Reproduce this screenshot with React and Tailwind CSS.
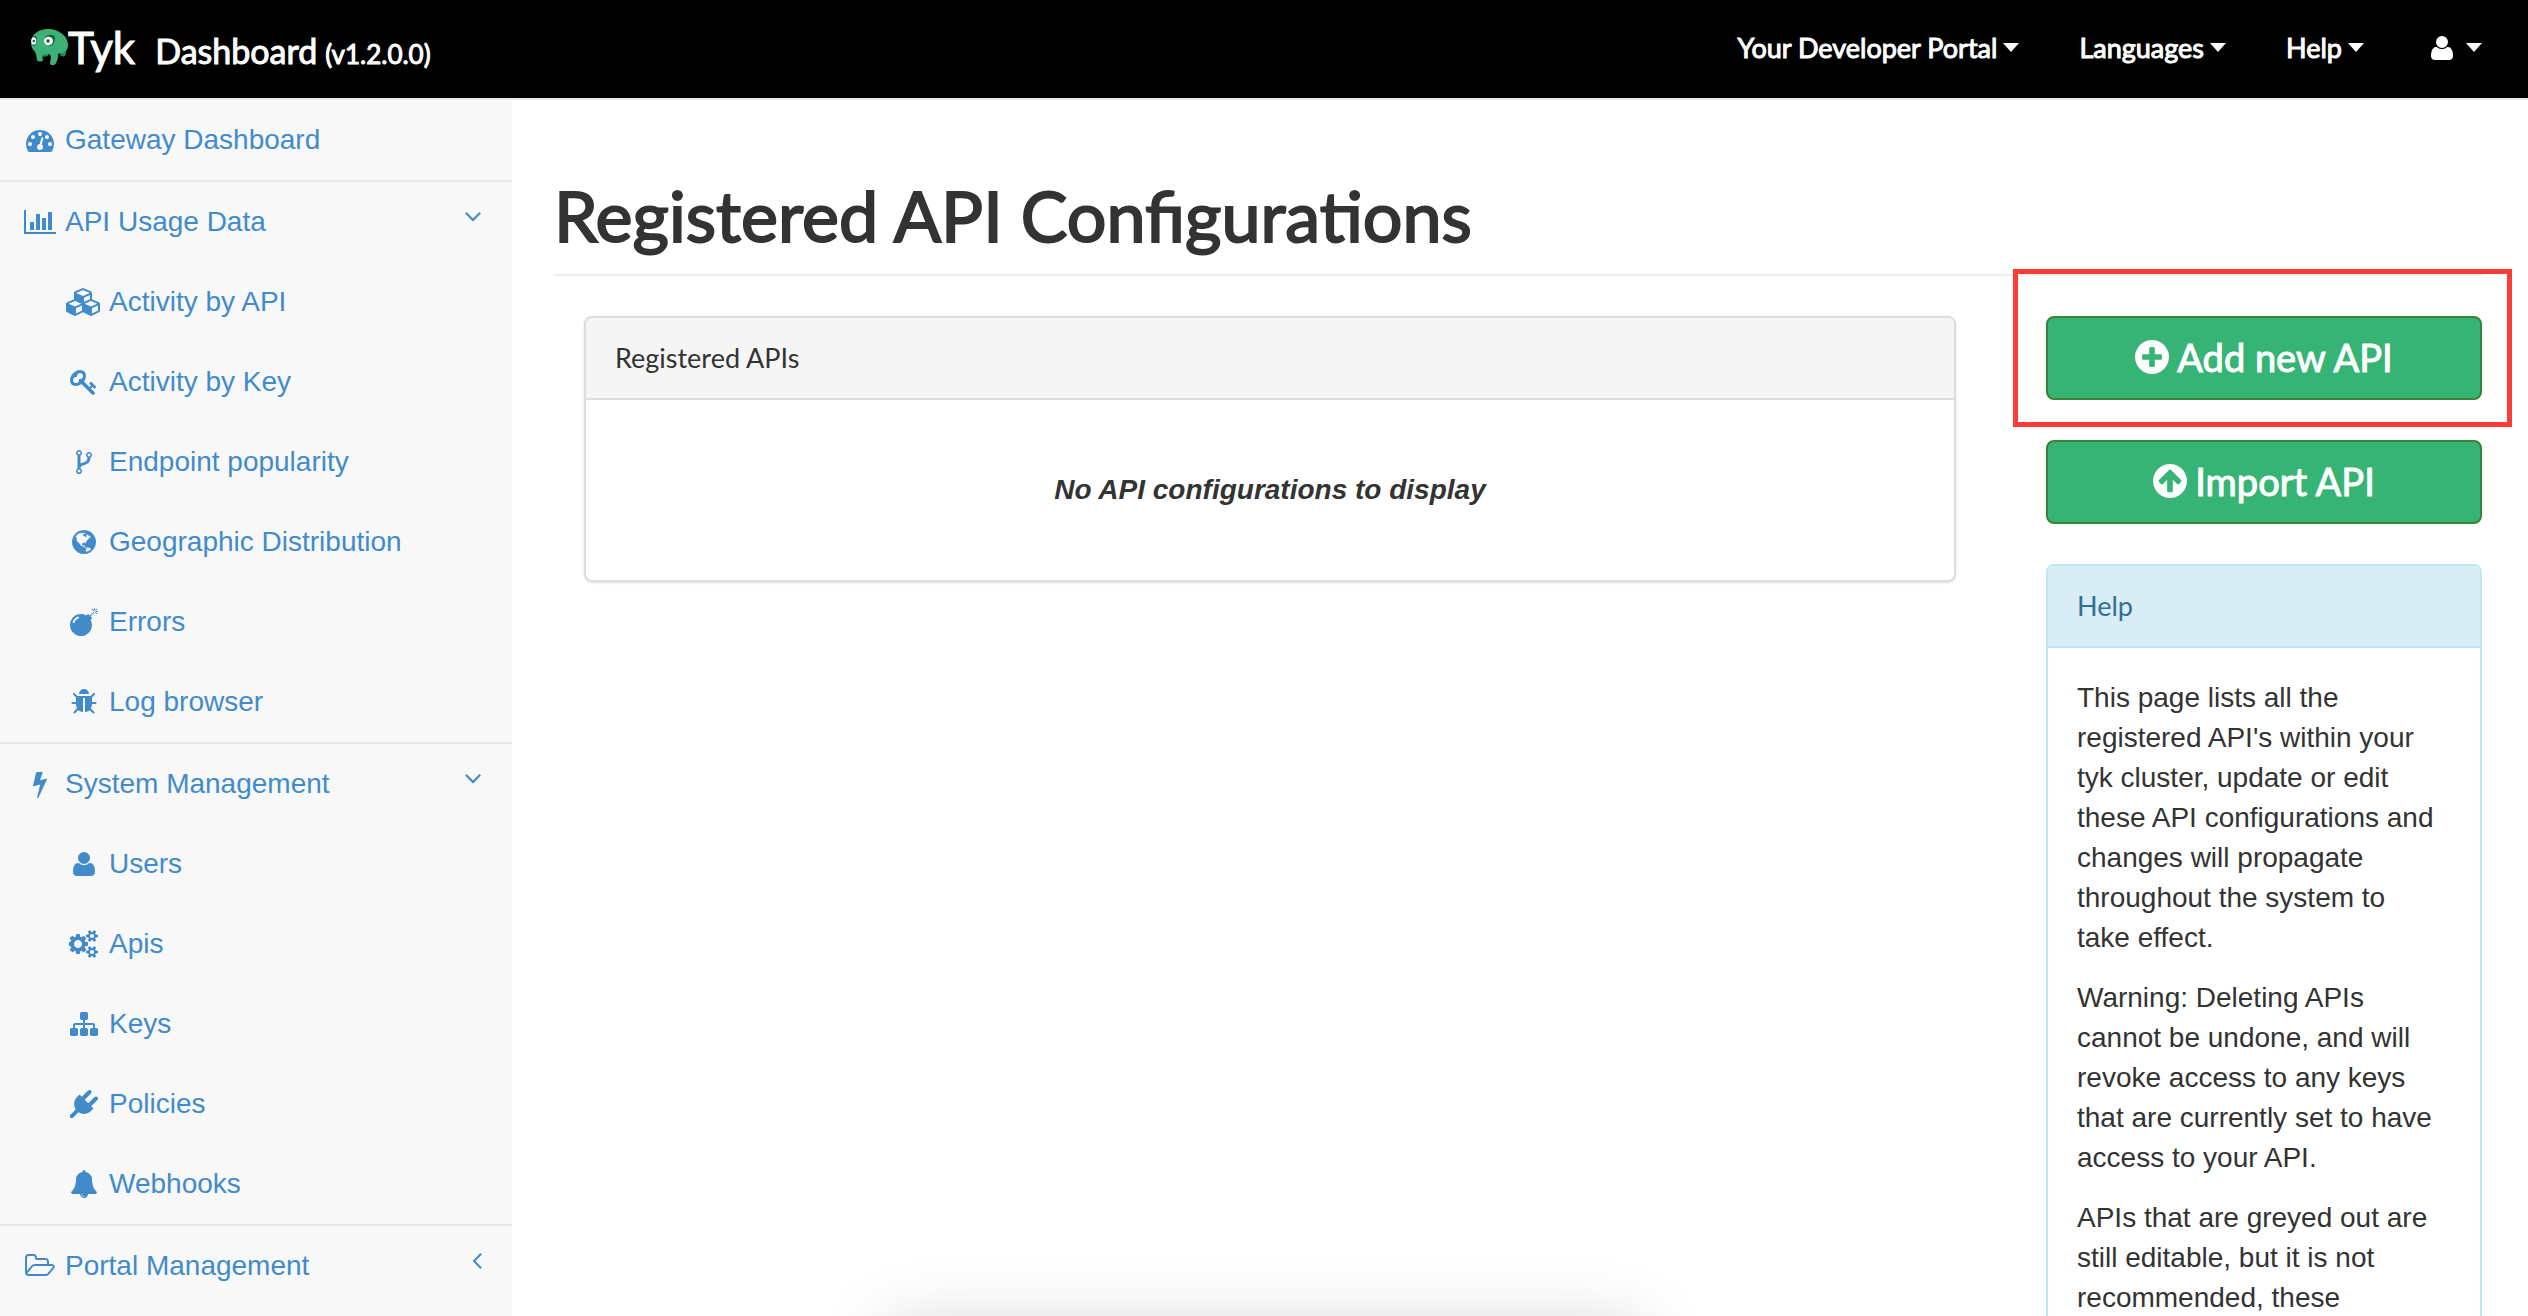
const ICONS = {
  dashboard: [
    1792,
    "M384 1152q0-53-37.5-90.5t-90.5-37.5-90.5 37.5-37.5 90.5 37.5 90.5 90.5 37.5 90.5-37.5 37.5-90.5zm192-448q0-53-37.5-90.5t-90.5-37.5-90.5 37.5-37.5 90.5 37.5 90.5 90.5 37.5 90.5-37.5 37.5-90.5zm428 481l101-382q6-26-7.5-48.5t-38.5-29.5-48 6.5-30 39.5l-101 382q-60 5-107 43.5t-63 98.5q-20 77 20 146t117 89 146-20 89-117q16-60-6-117t-72-91zm660-33q0-53-37.5-90.5t-90.5-37.5-90.5 37.5-37.5 90.5 37.5 90.5 90.5 37.5 90.5-37.5 37.5-90.5zm-640-640q0-53-37.5-90.5t-90.5-37.5-90.5 37.5-37.5 90.5 37.5 90.5 90.5 37.5 90.5-37.5 37.5-90.5zm448 192q0-53-37.5-90.5t-90.5-37.5-90.5 37.5-37.5 90.5 37.5 90.5 90.5 37.5 90.5-37.5 37.5-90.5zm320 448q0 261-141 483-19 29-54 29h-1402q-35 0-54-29-141-221-141-483 0-182 71-348t191-286 286-191 348-71 348 71 286 191 191 286 71 348z",
  ],
  chart: [
    2048,
    "M640 896v512h-256v-512h256zm384-512v1024h-256v-1024h256zm1024 1152v128h-2048v-1536h128v1408h1920zm-640-896v768h-256v-768h256zm384-384v1152h-256v-1152h256z",
  ],
  cubes: [
    2304,
    "M640 1632l384-192v-314l-384 164v342zm-64-454l404-173-404-173-404 173zm1088 454l384-192v-314l-384 164v342zm-64-454l404-173-404-173-404 173zm-448-293l384-165v-266l-384 164v267zm-64-379l441-189-441-189-441 189zm1088 518v416q0 36-19 67t-52 47l-448 224q-25 14-57 14t-57-14l-448-224q-4-2-7-4-2 2-7 4l-448 224q-25 14-57 14t-57-14l-448-224q-33-16-52-47t-19-67v-416q0-38 21.5-70t56.5-48l434-186v-400q0-38 21.5-70t56.5-48l448-192q23-10 50-10t50 10l448 192q35 16 56.5 48t21.5 70v400l434 186q36 16 57 48t21 70z",
  ],
  key: [
    1792,
    "M832 512q0-80-56-136t-136-56-136 56-56 136q0 42 19 83-41-19-83-19-80 0-136 56t-56 136 56 136 136 56 136-56 56-136q0-42-19-83 41 19 83 19 80 0 136-56t56-136zm851 704q0 17-49 66t-66 49q-9 0-28.5-16t-36.5-33-38.5-40-24.5-26l-96 96 220 220q28 28 28 68 0 42-39 81t-81 39q-40 0-68-28l-671-671q-176 131-365 131-163 0-265.5-102.5t-102.5-265.5q0-160 95-313t248-248 313-95q163 0 265.5 102.5t102.5 265.5q0 189-131 365l355 355 96-96q-3-3-26-24.5t-40-38.5-33-36.5-16-28.5q0-17 49-66t66-49q13 0 23 10 6 6 46 44.5t82 79.5 86.5 86 73 78 28.5 41z",
  ],
  fork: [
    1792,
    "M672 1472q0-40-28-68t-68-28-68 28-28 68 28 68 68 28 68-28 28-68zm0-1152q0-40-28-68t-68-28-68 28-28 68 28 68 68 28 68-28 28-68zm640 128q0-40-28-68t-68-28-68 28-28 68 28 68 68 28 68-28 28-68zm96 0q0 52-26 96.5t-70 69.5q-2 287-226 414-67 38-203 81-128 40-169.5 71t-41.5 100v26q44 25 70 69.5t26 96.5q0 80-56 136t-136 56-136-56-56-136q0-52 26-96.5t70-69.5v-820q-44-25-70-69.5t-26-96.5q0-80 56-136t136-56 136 56 56 136q0 52-26 96.5t-70 69.5v497q54-26 154-57 55-17 87.5-29.5t70.5-31 59-39.5 40.5-51 28-69.5 8.5-91.5q-44-25-70-69.5t-26-96.5q0-80 56-136t136-56 136 56 56 136z",
  ],
  globe: [
    1792,
    "M896 128q209 0 385.5 103t279.5 279.5 103 385.5-103 385.5-279.5 279.5-385.5 103-385.5-103-279.5-279.5-103-385.5 103-385.5 279.5-279.5 385.5-103zm274 521q-2 1-9.5 9.5t-13.5 9.5q2 0 4.5-5t5-11 3.5-7q6-7 22-15 14-6 52-12 34-8 51 11-2-2 9.5-13t14.5-12q3-2 15-4.5t15-7.5l2-22q-12 1-17.5-7t-6.5-21q0 2-6 8 0-7-4.5-8t-11.5 1-9 1q-10-3-15-7.5t-8-16.5-4-15q-2-5-9.5-11t-9.5-10q-1-2-2.5-5.5t-3-6.5-4-5.5-5.5-2.5-7 5-7.5 10-4.5 5q-3-2-6-1.5t-4.5 1-4.5 3-5 3.5q-3 2-8.5 3t-8.5 2q15-5-1-11-10-4-16-3 9-4 7.5-12t-8.5-14h5q-1-4-8.5-8.5t-17.5-8.5-13-6q-8-5-34-9.5t-33-.5q-5 6-4.5 10.5t4 14 3.5 12.5q1 6-5.5 13t-6.5 12q0 7 14 15.5t10 21.5q-3 8-16 16t-16 12q-5 8-1.5 18.5t10.5 16.5q2 2 1.5 4t-3.5 4.5-5.5 4-6.5 3.5l-3 2q-11 5-20.5-6t-13.5-26q-7-25-16-30-23-8-29 1-5-13-41-26-25-9-58-4 6-1 0-15-7-15-19-12 3-6 4-17.5t1-13.5q3-13 12-23 1-1 7-8.5t9.5-13.5.5-6q35 4 50-11 5-5 11.5-17t10.5-17q9-6 14-5.5t14.5 5.5 14.5 5q14 1 15.5-11t-7.5-20q12 1 3-17-4-7-8-9-12-4-27 5-8 4 2 8-1-1-9.5 10.5t-16.5 17.5-16-5q-1-1-5.5-13.5t-9.5-13.5q-8 0-16 15 3-8-11-15t-24-8q19-12-8-27-7-4-20.5-5t-19.5 4q-5 7-5.5 11.5t5 8 10.5 5.5 11.5 4 8.5 3q14 10 8 14-2 1-8.5 3.5t-11.5 4.5-6 4q-3 4 0 14t-2 14q-5-5-9-17.5t-7-16.5q7 9-25 6l-10-1q-4 0-16 2t-20.5 1-13.5-8q-4-8 0-20 1-4 4-2-4-3-11-9.5t-10-8.5q-46 15-94 41 6 1 12-1 5-2 13-6.5t10-5.5q34-14 42-7l5-5q14 16 20 25-7-4-30-1-20 6-22 12 7 12 5 18-4-3-11.5-10t-14.5-11-15-5q-16 0-22 1-146 80-235 222 7 7 12 8 4 1 5 9t2.5 11 11.5-3q9 8 3 19 1-1 44 27 19 17 21 21 3 11-10 18-1-2-9-9t-9-4q-3 5 .5 18.5t10.5 12.5q-7 0-9.5 16t-2.5 35.5-1 23.5l2 1q-3 12 5.5 34.5t21.5 19.5q-13 3 20 43 6 8 8 9 3 2 12 7.5t15 10 10 10.5q4 5 10 22.5t14 23.5q-2 6 9.5 20t10.5 23q-1 0-2.5 1t-2.5 1q3 7 15.5 14t15.5 13q1 3 2 10t3 11 8 2q2-20-24-62-15-25-17-29-3-5-5.5-15.5t-4.5-14.5q2 0 6 1.5t8.5 3.5 7.5 4 2 3q-3 7 2 17.5t12 18.5 17 19 12 13q6 6 14 19.5t0 13.5q9 0 20 10t17 20q5 8 8 26t5 24q2 7 8.5 13.5t12.5 9.5l16 8 13 7q5 2 18.5 10.5t21.5 11.5q10 4 16 4t14.5-2.5 13.5-3.5q15-2 29 15t21 21q36 19 55 11-2 1 .5 7.5t8 15.5 9 14.5 5.5 8.5q5 6 18 15t18 15q6-4 7-9-3 8 7 20t18 10q14-3 14-32-31 15-49-18 0-1-2.5-5.5t-4-8.5-2.5-8.5 0-7.5 5-3q9 0 10-3.5t-2-12.5-4-13q-1-8-11-20t-12-15q-5 9-16 8t-16-9q0 1-1.5 5.5t-1.5 6.5q-13 0-15-1 1-3 2.5-17.5t3.5-22.5q1-4 5.5-12t7.5-14.5 4-12.5-4.5-9.5-17.5-2.5q-19 1-26 20-1 3-3 10.5t-5 11.5-9 7q-7 3-24 2t-24-5q-13-8-22.5-29t-9.5-37q0-10 2.5-26.5t3-25-5.5-24.5q3-2 9-9.5t10-10.5q2-1 4.5-1.5t4.5 0 4-1.5 3-6q-1-1-4-3-3-3-4-3 7 3 28.5-1.5t27.5 1.5q15 11 22-2 0-1-2.5-9.5t-.5-13.5q5 27 29 9 3 3 15.5 5t17.5 5q3 2 7 5.5t5.5 4.5 5-.5 8.5-6.5q10 14 12 24 11 40 19 44 7 3 11 2t4.5-9.5 0-14-1.5-12.5l-1-8v-18l-1-8q-15-3-18.5-12t1.5-18.5 15-18.5q1-1 8-3.5t15.5-6.5 12.5-8q21-19 15-35 7 0 11-9-1 0-5-3t-7.5-5-4.5-2q9-5 2-16 5-3 7.5-11t7.5-10q9 12 21 2 8-8 1-16 5-7 20.5-10.5t18.5-9.5q7 2 8-2t1-12 3-12q4-5 15-9t13-5l17-11q3-4 0-4 18 2 31-11 10-11-6-20 3-6-3-9.5t-15-5.5q3-1 11.5-.5t10.5-1.5q15-10-7-16-17-5-43 12zm-163 877q206-36 351-189-3-3-12.5-4.5t-12.5-3.5q-18-7-24-8 1-7-2.5-13t-8-9-12.5-8-11-7q-2-2-7-6t-7-5.5-7.5-4.5-8.5-2-10 1l-3 1q-3 1-5.5 2.5t-5.5 3-4 3 0 2.5q-21-17-36-22-5-1-11-5.5t-10.5-7-10-1.5-11.5 7q-5 5-6 15t-2 13q-7-5 0-17.5t2-18.5q-3-6-10.5-4.5t-12 4.5-11.5 8.5-9 6.5-8.5 5.5-8.5 7.5q-3 4-6 12t-5 11q-2-4-11.5-6.5t-9.5-5.5q2 10 4 35t5 38q7 31-12 48-27 25-29 40-4 22 12 26 0 7-8 20.5t-7 21.5q0 6 2 16z",
  ],
  bomb: [
    1792,
    "M571 589q-10-25-34-35t-49 0q-108 44-191 127t-127 191q-10 25 0 49t35 34q13 5 24 5 42 0 60-40 34-84 98.5-148.5t148.5-98.5q25-11 35-35t0-49zm942-356l46 46-244 243 68 68q19 19 19 45.5t-19 45.5l-64 64q89 161 89 343 0 143-55.5 273.5t-150 225-225 150-273.5 55.5-273.5-55.5-225-150-150-225-55.5-273.5 55.5-273.5 150-225 225-150 273.5-55.5q182 0 343 89l64-64q19-19 45.5-19t45.5 19l68 68zm8-56q-10 10-22 10-13 0-23-10l-91-90q-9-10-9-23t9-23q10-9 23-9t23 9l90 91q10 9 10 22.5t-10 22.5zm230 230q-11 9-23 9t-23-9l-90-91q-10-9-10-22.5t10-22.5q9-10 22.5-10t22.5 10l91 90q9 10 9 23t-9 23zm41-183q0 14-9 23t-23 9h-96q-14 0-23-9t-9-23 9-23 23-9h96q14 0 23 9t9 23zm-192-192v96q0 14-9 23t-23 9-23-9-9-23v-96q0-14 9-23t23-9 23 9 9 23zm151 55l-91 90q-10 10-22 10-13 0-23-10-10-9-10-22.5t10-22.5l90-91q10-9 23-9t23 9q9 10 9 23t-9 23z",
  ],
  bug: [
    1792,
    "M1696 960q0 26-19 45t-45 19h-224q0 171-67 290l208 209q19 19 19 45t-19 45q-18 19-45 19t-45-19l-198-197q-5 5-15 13t-42 28.5-65 36.5-82 29-97 13v-896h-128v896q-51 0-101.5-13.5t-87-33-66-39-43.5-32.5l-15-14-183 207q-20 21-48 21-24 0-43-16-19-18-20.5-44.5t15.5-46.5l202-227q-58-114-58-274h-224q-26 0-45-19t-19-45 19-45 45-19h224v-294l-173-173q-19-19-19-45t19-45 45-19 45 19l173 173h844l173-173q19-19 45-19t45 19 19 45-19 45l-173 173v294h224q26 0 45 19t19 45zm-480-576h-640q0-133 93.5-226.5t226.5-93.5 226.5 93.5 93.5 226.5z",
  ],
  bolt: [
    1792,
    "M1333 566q18 20 7 44l-540 1157q-13 25-42 25-4 0-14-2-17-5-25.5-19t-4.5-30l197-808-406 101q-4 1-12 1-18 0-31-11-18-15-13-39l201-825q4-14 16-23t28-9h328q19 0 32 12.5t13 29.5q0 8-5 18l-171 463 396-98q8-2 12-2 19 0 34 15z",
  ],
  user: [
    1792,
    "M1600 1405q0 120-73 189.5t-194 69.5h-874q-121 0-194-69.5t-73-189.5q0-53 3.5-103.5t14-109 26.5-108.5 43-97.5 62-81 85.5-53.5 111.5-20q9 0 42 21.5t74.5 48 108 48 133.5 21.5 133.5-21.5 108-48 74.5-48 42-21.5q61 0 111.5 20t85.5 53.5 62 81 43 97.5 26.5 108.5 14 109 3.5 103.5zm-320-893q0 159-112.5 271.5t-271.5 112.5-271.5-112.5-112.5-271.5 112.5-271.5 271.5-112.5 271.5 112.5 112.5 271.5z",
  ],
  cogs: [
    1920,
    "M832 896q0-106-75-181t-181-75-181 75-75 181 75 181 181 75 181-75 75-181zm768 512q0-52-38-90t-90-38-90 38-38 90q0 53 37.5 90.5t90.5 37.5 90.5-37.5 37.5-90.5zm0-1024q0-52-38-90t-90-38-90 38-38 90q0 53 37.5 90.5t90.5 37.5 90.5-37.5 37.5-90.5zm-384 421v185q0 10-7 19.5t-16 10.5l-155 24q-11 35-32 76 34 48 90 115 7 11 7 20 0 12-7 19-23 30-82.5 89.5t-78.5 59.5q-11 0-21-7l-115-90q-37 19-77 31-11 108-23 155-7 24-30 24h-186q-11 0-20-7.5t-10-17.5l-23-153q-34-10-75-31l-118 89q-7 7-20 7-11 0-21-8-144-133-144-160 0-9 7-19 10-14 41-53t47-61q-23-44-35-82l-152-24q-10-1-17-9.5t-7-19.5v-185q0-10 7-19.5t16-10.5l155-24q11-35 32-76-34-48-90-115-7-11-7-20 0-12 7-20 22-30 82-89t79-59q11 0 21 7l115 90q34-18 77-32 11-108 23-154 7-24 30-24h186q11 0 20 7.5t10 17.5l23 153q34 10 75 31l118-89q8-7 20-7 11 0 21 8 144 133 144 160 0 8-7 19-12 16-42 54t-45 60q23 48 34 82l152 23q10 2 17 10.5t7 19.5zm640 533v140q0 16-149 31-12 27-30 52 51 113 51 138 0 4-4 7-122 71-124 71-8 0-46-47t-52-68q-20 2-30 2t-30-2q-14 21-52 68t-46 47q-2 0-124-71-4-3-4-7 0-25 51-138-18-25-30-52-149-15-149-31v-140q0-16 149-31 13-29 30-52-51-113-51-138 0-4 4-7 4-2 35-20t59-34 30-16q8 0 46 46.5t52 67.5q20-2 30-2t30 2q51-71 92-112l6-2q4 0 124 70 4 3 4 7 0 25-51 138 17 23 30 52 149 15 149 31zm0-1024v140q0 16-149 31-12 27-30 52 51 113 51 138 0 4-4 7-122 71-124 71-8 0-46-47t-52-68q-20 2-30 2t-30-2q-14 21-52 68t-46 47q-2 0-124-71-4-3-4-7 0-25 51-138-18-25-30-52-149-15-149-31v-140q0-16 149-31 13-29 30-52-51-113-51-138 0-4 4-7 4-2 35-20t59-34 30-16q8 0 46 46.5t52 67.5q20-2 30-2t30 2q51-71 92-112l6-2q4 0 124 70 4 3 4 7 0 25-51 138 17 23 30 52 149 15 149 31z",
  ],
  sitemap: [
    1792,
    "M1792 1248v320q0 40-28 68t-68 28h-320q-40 0-68-28t-28-68v-320q0-40 28-68t68-28h96v-192h-512v192h96q40 0 68 28t28 68v320q0 40-28 68t-68 28h-320q-40 0-68-28t-28-68v-320q0-40 28-68t68-28h96v-192h-512v192h96q40 0 68 28t28 68v320q0 40-28 68t-68 28h-320q-40 0-68-28t-28-68v-320q0-40 28-68t68-28h96v-192q0-52 38-90t90-38h512v-192h-96q-40 0-68-28t-28-68v-320q0-40 28-68t68-28h320q40 0 68 28t28 68v320q0 40-28 68t-68 28h-96v192h512q52 0 90 38t38 90v192h96q40 0 68 28t28 68z",
  ],
  plug: [
    1792,
    "M1755 453q37 38 37 90.5t-37 90.5l-401 400 150 150-160 160q-163 163-389.5 186.5t-411.5-100.5l-362 362h-181v-181l362-362q-124-185-100.5-411.5t186.5-389.5l160-160 150 150 400-401q38-37 91-37t90 37 37 90.5-37 90.5l-400 401 234 234 401-400q38-37 91-37t90 37z",
  ],
  bell: [
    1792,
    "M912 1696q0-16-16-16-59 0-101.5-42.5t-42.5-101.5q0-16-16-16t-16 16q0 73 51.5 124.5t124.5 51.5q16 0 16-16zm816-288q0 52-38 90t-90 38h-448q0 106-75 181t-181 75-181-75-75-181h-448q-52 0-90-38t-38-90q50-42 91-88t85-119.5 74.5-158.5 50-206 19.5-260q0-152 117-282.5t307-158.5q-8-19-8-39 0-40 28-68t68-28 68 28 28 68q0 20-8 39 190 28 307 158.5t117 282.5q0 139 19.5 260t50 206 74.5 158.5 85 119.5 91 88z",
  ],
  folder: [
    2048,
    "M1845 931q0-35-53-35h-1088q-40 0-85.5 21.5t-71.5 52.5l-294 363q-18 24-18 40 0 35 53 35h1088q40 0 86-22t71-53l294-363q18-22 18-39zm-1141-163h768v-160q0-40-28-68t-68-28h-576q-40 0-68-28t-28-68v-64q0-40-28-68t-68-28h-320q-40 0-68 28t-28 68v853l256-315q44-53 116-87.5t140-34.5zm1269 163q0 62-46 120l-295 363q-43 53-116 87.5t-140 34.5h-1088q-92 0-158-66t-66-158v-960q0-92 66-158t158-66h320q92 0 158 66t66 158v32h544q92 0 158 66t66 158v160h192q54 0 99 24.5t67 70.5q15 32 15 68z",
  ],
};

const PLUS_CIRCLE =
  "M1344 960v-128q0-26-19-45t-45-19h-256v-256q0-26-19-45t-45-19h-128q-26 0-45 19t-19 45v256h-256q-26 0-45 19t-19 45v128q0 26 19 45t45 19h256v256q0 26 19 45t45 19h128q26 0 45-19t19-45v-256h256q26 0 45-19t19-45zm320-64q0 209-103 385.5t-279.5 279.5-385.5 103-385.5-103-279.5-279.5-103-385.5 103-385.5 279.5-279.5 385.5-103 385.5 103 279.5 279.5 103 385.5z";
const UP_CIRCLE =
  "M1412 895q0-27-18-45l-362-362-91-91q-18-18-45-18t-45 18l-91 91-362 362q-18 18-18 45t18 45l91 91q18 18 45 18t45-18l189-189v502q0 26 19 45t45 19h128q26 0 45-19t19-45v-502l189 189q19 19 45 19t45-19l91-91q18-18 18-45zm252 1q0 209-103 385.5t-279.5 279.5-385.5 103-385.5-103-279.5-279.5-103-385.5 103-385.5 279.5-279.5 385.5-103 385.5 103 279.5 279.5 103 385.5z";
const ANGLE_DOWN =
  "M1395 736q0 13-10 23l-466 466q-10 10-23 10t-23-10l-466-466q-10-10-10-23t10-23l50-50q10-10 23-10t23 10l393 393 393-393q10-10 23-10t23 10l50 50q10 10 10 23z";
const ANGLE_LEFT =
  "M1203 544q0 13-10 23l-393 393 393 393q10 10 10 23t-10 23l-50 50q-10 10-23 10t-23-10l-466-466q-10-10-10-23t10-23l466-466q10-10 23-10t23 10l50 50q10 10 10 23z";

function Icon({ name }) {
  const [width, path] = ICONS[name];
  return (
    <span className="flex w-9 shrink-0 justify-center" aria-hidden="true">
      <svg viewBox={`0 0 ${width} 1792`} className="h-7 w-auto shrink-0 fill-current">
        <path d={path} />
      </svg>
    </span>
  );
}

function Angle({ open }) {
  return (
    <svg
      viewBox={open ? "320 384 1152 1792" : "576 384 640 1792"}
      className="ml-auto h-7 w-auto shrink-0 fill-current"
      aria-hidden="true"
    >
      <path d={open ? ANGLE_DOWN : ANGLE_LEFT} />
    </svg>
  );
}

function Caret() {
  return (
    <svg viewBox="0 0 16 10" className="h-[10px] w-4 shrink-0 fill-current" aria-hidden="true">
      <path d="M0 0h16l-8 9z" />
    </svg>
  );
}

function Mascot() {
  return (
    <svg viewBox="0 0 37 37" className="h-[37px] w-[37px] shrink-0" aria-hidden="true">
      <path d="M4 22l1 4c3 2 8 2 12 1v-4zM28 23l2 4c3 1 5 0 5-3l-1-5z" fill="#1f8a55" />
      <path
        d="M0 14C0 5 8 0 17 0c11 0 20 7 20 16 0 5-3 8-6 8-2 0-3 0-4 1 0 3 0 6-2 9-1 3-6 3-6 0l1-6c0-2-2-3-4-3l-5 1 1 5c-1 2-5 2-6 0l-1-7C2 21 0 18 0 14z"
        fill="#3cb278"
      />
      <path d="M14 8c3-3 9-3 10 0 0 4-1 7-4 9-2 0-5-1-6-3z" fill="#17603b" />
      <ellipse cx="17.500" cy="12" rx="4.500" ry="4.200" fill="#fff" />
      <path d="M1 8c3-2 5-1 5 3s-2 6-4 6z" fill="#17603b" />
      <ellipse cx="2.800" cy="12" rx="2.500" ry="3.800" fill="#fff" />
      <circle cx="17" cy="12" r="1.700" fill="#17603b" />
      <circle cx="2.800" cy="12" r="1.300" fill="#17603b" />
    </svg>
  );
}

const SECTIONS = [
  { label: "Gateway Dashboard", icon: "dashboard" },
  {
    label: "API Usage Data",
    icon: "chart",
    items: [
      ["cubes", "Activity by API"],
      ["key", "Activity by Key"],
      ["fork", "Endpoint popularity"],
      ["globe", "Geographic Distribution"],
      ["bomb", "Errors"],
      ["bug", "Log browser"],
    ],
  },
  {
    label: "System Management",
    icon: "bolt",
    items: [
      ["user", "Users"],
      ["cogs", "Apis"],
      ["sitemap", "Keys"],
      ["plug", "Policies"],
      ["bell", "Webhooks"],
    ],
  },
  { label: "Portal Management", icon: "folder", collapsed: true },
];

function Sidebar() {
  return (
    <nav className="w-[512px] shrink-0 bg-[#f8f8f8] text-[#428bca]">
      <ul>
        {SECTIONS.map((section) => (
          <li key={section.label} className="border-b-2 border-[#e7e7e7] last:border-b-0">
            <a href="#" className="flex h-20 items-center gap-[7px] pr-[30px] pl-[22px]">
              <Icon name={section.icon} />
              <span>{section.label}</span>
              {(section.items || section.collapsed) && <Angle open={Boolean(section.items)} />}
            </a>
            {section.items && (
              <ul>
                {section.items.map(([icon, label]) => (
                  <li key={label}>
                    <a href="#" className="flex h-20 items-center gap-[7px] pl-[66px]">
                      <Icon name={icon} />
                      <span>{label}</span>
                    </a>
                  </li>
                ))}
              </ul>
            )}
          </li>
        ))}
      </ul>
    </nav>
  );
}

function TopBar() {
  return (
    <header className="flex h-[100px] shrink-0 items-center justify-between border-b-2 border-[#e7e7e7] bg-black pr-[46px] pb-0.5 pl-[31px] font-[Lato,sans-serif] text-white">
      <a href="#" className="flex items-center pb-0.5">
        <Mascot />
        <span className="flex items-baseline [-webkit-text-stroke:1px]">
          <span className="text-[44px] leading-none">Tyk</span>
          <span className="ml-5 text-[34px] leading-none">Dashboard</span>
          <span className="ml-2 text-[26px] leading-none">(v1.2.0.0)</span>
        </span>
      </a>
      <nav className="flex items-center gap-[60px] text-[27px] [-webkit-text-stroke:1px]">
        {["Your Developer Portal", "Languages", "Help"].map((label) => (
          <button key={label} type="button" className="flex items-center gap-1.5">
            {label}
            <Caret />
          </button>
        ))}
        <button type="button" aria-label="Account" className="flex items-center gap-1.5">
          <Icon name="user" />
          <Caret />
        </button>
      </nav>
    </header>
  );
}

function ActionButton({ path, children }) {
  return (
    <button
      type="button"
      className="flex h-[84px] w-full items-center justify-center gap-2 rounded-lg border-2 border-[#398439] bg-[#36b475] pb-0.5 font-[Lato,sans-serif] text-[38px] text-white [-webkit-text-stroke:1px]"
    >
      <svg viewBox="128 128 1536 1536" className="size-[34px] fill-current" aria-hidden="true">
        <path d={path} />
      </svg>
      {children}
    </button>
  );
}

export default function App() {
  return (
    <div className="relative flex h-screen flex-col overflow-hidden bg-white font-['Liberation_Sans',Arial,sans-serif] text-[28px] leading-10 text-[#333]">
      <TopBar />
      <div className="flex min-h-0 flex-1">
        <Sidebar />
        <main className="min-w-0 flex-1 pt-[76px] pr-[46px] pl-[42px]">
          <h1 className="border-b-2 border-[#eee] pb-5 font-[Lato,sans-serif] text-[70px] leading-[78px] [-webkit-text-stroke:2px]">
            Registered API Configurations
          </h1>
          <div className="mt-10 flex items-start gap-[90px] pl-[30px]">
            <section className="min-w-0 flex-1 overflow-hidden rounded-lg border-2 border-[#ddd] shadow-sm">
              <h2 className="border-b-2 border-[#ddd] bg-[#f5f5f5] px-[29px] py-5 font-[Lato,sans-serif] text-[27px]">
                Registered APIs
              </h2>
              <p className="py-[70px] text-center font-bold italic">No API configurations to display</p>
            </section>
            <aside className="w-[436px] shrink-0">
              <div className="relative">
                <ActionButton path={PLUS_CIRCLE}>Add new API</ActionButton>
                <div className="pointer-events-none absolute -top-[47px] -right-[30px] -bottom-[27px] -left-[33px] border-[5px] border-[#ff3b38]" />
              </div>
              <div className="mt-10">
                <ActionButton path={UP_CIRCLE}>Import API</ActionButton>
              </div>
              <section className="mt-10 overflow-hidden rounded-lg border-2 border-[#bce8f1]">
                <h2 className="border-b-2 border-[#bce8f1] bg-[#d9edf7] px-[29px] py-5 font-[Lato,sans-serif] text-[27px] text-[#31708f]">
                  Help
                </h2>
                <div className="flex flex-col gap-5 py-[30px] pr-9 pl-[29px]">
                  <p>
                    This page lists all the registered API's within your tyk cluster, update or edit these API
                    configurations and changes will propagate throughout the system to take effect.
                  </p>
                  <p>
                    Warning: Deleting APIs cannot be undone, and will revoke access to any keys that are currently
                    set to have access to your API.
                  </p>
                  <p>APIs that are greyed out are still editable, but it is not recommended, these</p>
                </div>
              </section>
            </aside>
          </div>
        </main>
      </div>
      <div className="pointer-events-none absolute top-full right-[35%] left-[35%] h-20 shadow-[0_10px_70px_rgba(0,0,0,0.17)]" />
    </div>
  );
}
